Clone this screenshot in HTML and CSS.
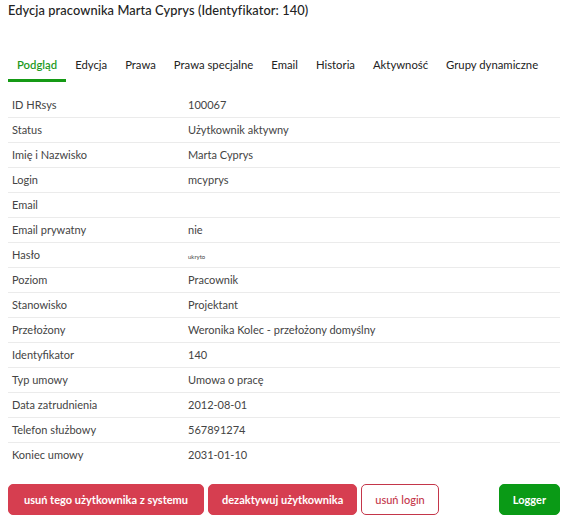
FILE: index.html
```html
<!DOCTYPE html>
<html lang="pl">
<head>
<meta charset="utf-8">
<link rel="stylesheet" href="styles.css">
</head>
<body>
<div class="page">
  <h1 class="title">Edycja pracownika Marta Cyprys (Identyfikator: 140)</h1>
  <ul class="tabs">
    <li class="tab active">Podgląd</li>
    <li class="tab">Edycja</li>
    <li class="tab">Prawa</li>
    <li class="tab">Prawa specjalne</li>
    <li class="tab">Email</li>
    <li class="tab">Historia</li>
    <li class="tab">Aktywność</li>
    <li class="tab">Grupy dynamiczne</li>
  </ul>
  <table class="details">
    <colgroup><col class="kcol"><col></colgroup>
    <tr><td>ID HRsys</td><td>100067</td></tr>
    <tr><td>Status</td><td>Użytkownik aktywny</td></tr>
    <tr><td>Imię i Nazwisko</td><td>Marta Cyprys</td></tr>
    <tr><td>Login</td><td>mcyprys</td></tr>
    <tr><td>Email</td><td></td></tr>
    <tr><td>Email prywatny</td><td>nie</td></tr>
    <tr><td>Hasło</td><td><small class="tiny">ukryto</small></td></tr>
    <tr><td>Poziom</td><td>Pracownik</td></tr>
    <tr><td>Stanowisko</td><td>Projektant</td></tr>
    <tr><td>Przełożony</td><td>Weronika Kolec - przełożony domyślny</td></tr>
    <tr><td>Identyfikator</td><td>140</td></tr>
    <tr><td>Typ umowy</td><td>Umowa o pracę</td></tr>
    <tr><td>Data zatrudnienia</td><td>2012-08-01</td></tr>
    <tr><td>Telefon służbowy</td><td>567891274</td></tr>
    <tr><td>Koniec umowy</td><td>2031-01-10</td></tr>
  </table>
  <div class="actions">
    <button class="btn danger wide">usuń tego użytkownika z systemu</button>
    <button class="btn danger">dezaktywuj użytkownika</button>
    <button class="btn outline">usuń login</button>
    <span class="spacer"></span>
    <button class="btn success">Logger</button>
  </div>
</div>
</body>
</html>
```
FILE: styles.css
```css
* { box-sizing: border-box; }
html, body { margin: 0; padding: 0; background: #fff; }
body {
  font-family: "Lato", "Open Sans", sans-serif;
  color: #212529;
}
.page {
  width: 566px;
  padding: 0 6px 0 8px;
}
.title {
  margin: 0;
  padding-top: 2px;
  font-size: 12.8px;
  font-weight: 500;
  line-height: 17px;
  color: #222;
  letter-spacing: 0.1px;
}
.tabs {
  list-style: none;
  margin: 38px 0 0 0;
  padding: 0;
  display: flex;
}
.tab {
  font-size: 11.3px;
  line-height: 15px;
  padding: 0 9px 7px 9px;
  border-bottom: 2px solid transparent;
  color: #222;
  white-space: nowrap;
}
.tab.active {
  color: #1e9a1e;
  font-weight: 600;
  border-bottom: 3px solid #159a15;
}
.details {
  width: 100%;
  table-layout: fixed;
  border-collapse: collapse;
  margin-top: 10px;
  font-size: 11px;
  color: #444;
}
.details .kcol { width: 176px; }
.details td {
  height: 25px;
  padding: 0 4px;
  border-bottom: 1px solid #ebebeb;
  vertical-align: middle;
}
.details tr:last-child td { border-bottom: none; }
.tiny { font-size: 6px; }
.actions {
  display: flex;
  gap: 4px;
  margin-top: 17px;
}
.spacer { flex: 1; }
.btn {
  font-family: inherit;
  font-size: 11px;
  font-weight: 700;
  height: 31px;
  padding: 0 13px;
  border-radius: 5px;
  border: 1px solid transparent;
  cursor: pointer;
}
.btn.wide { padding: 0 15px; }
.btn.danger { background: #d63e50; color: #fff; border-color: #d63e50; }
.btn.outline { background: #fff; color: #c4364a; border-color: #c4364a; font-weight: 500; }
.btn.success { background: #0a9a16; color: #fff; border-color: #0a9a16; }
```
